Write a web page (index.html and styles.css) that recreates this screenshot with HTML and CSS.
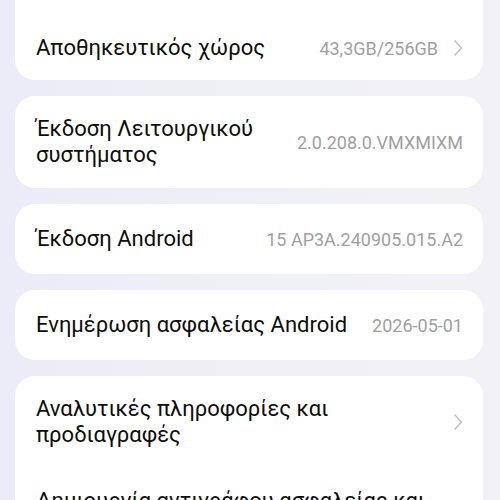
FILE: index.html
```html
<!DOCTYPE html>
<html lang="el">
<head>
    <meta charset="UTF-8">
    <title>Σχετικά με το τηλέφωνο</title>
    <link rel="stylesheet" href="styles.css">
</head>
<body>

<div class="list">
    <div class="card card-top">
        <div class="row">
            <span class="title">Αποθηκευτικός χώρος</span>
            <span class="value">43,3GB/256GB</span>
            <svg class="chevron" viewBox="0 0 10 18" width="10" height="18"><path d="M1.5 1.5 L8.5 9 L1.5 16.5"/></svg>
        </div>
    </div>

    <div class="card">
        <div class="row">
            <span class="title">Έκδοση Λειτουργικού συστήματος</span>
            <span class="value">2.0.208.0.VMXMIXM</span>
        </div>
    </div>

    <div class="card">
        <div class="row">
            <span class="title">Έκδοση Android</span>
            <span class="value">15 AP3A.240905.015.A2</span>
        </div>
    </div>

    <div class="card">
        <div class="row">
            <span class="title">Ενημέρωση ασφαλείας Android</span>
            <span class="value">2026-05-01</span>
        </div>
    </div>

    <div class="card">
        <div class="row">
            <span class="title">Αναλυτικές πληροφορίες και προδιαγραφές</span>
            <svg class="chevron" viewBox="0 0 10 18" width="10" height="18"><path d="M1.5 1.5 L8.5 9 L1.5 16.5"/></svg>
        </div>
        <div class="row">
            <span class="title">Δημιουργία αντιγράφου ασφαλείας και επαναφορά</span>
            <svg class="chevron" viewBox="0 0 10 18" width="10" height="18"><path d="M1.5 1.5 L8.5 9 L1.5 16.5"/></svg>
        </div>
    </div>
</div>

</body>
</html>
```

FILE: styles.css
```css
body {
    margin: 0;
    font-family: Roboto, "Noto Sans", sans-serif;
    background: linear-gradient(to right, #ececf8, #f2f2f6);
    min-height: 500px;
}
.list {
    display: flex;
    flex-direction: column;
    gap: 16px;
    padding: 0 17px 0 15px;
}
.card {
    background: #fff;
    border-radius: 20px;
}
.card-top {
    border-top-left-radius: 0;
    border-top-right-radius: 0;
}
.card-top .row {
    min-height: 80px;
    padding-top: 24px;
    padding-bottom: 8px;
}
.row {
    display: flex;
    align-items: center;
    gap: 15px;
    box-sizing: border-box;
    min-height: 70px;
    padding: 20px 20px 20px 21px;
}
.title {
    flex: 1;
    font-size: 22px;
    line-height: 26px;
    color: #0d0d0d;
}
.value {
    font-size: 18px;
    color: #9f9f9f;
    white-space: nowrap;
}
.chevron {
    flex: none;
    fill: none;
    stroke: #c2c2c2;
    stroke-width: 1.5;
}
```
